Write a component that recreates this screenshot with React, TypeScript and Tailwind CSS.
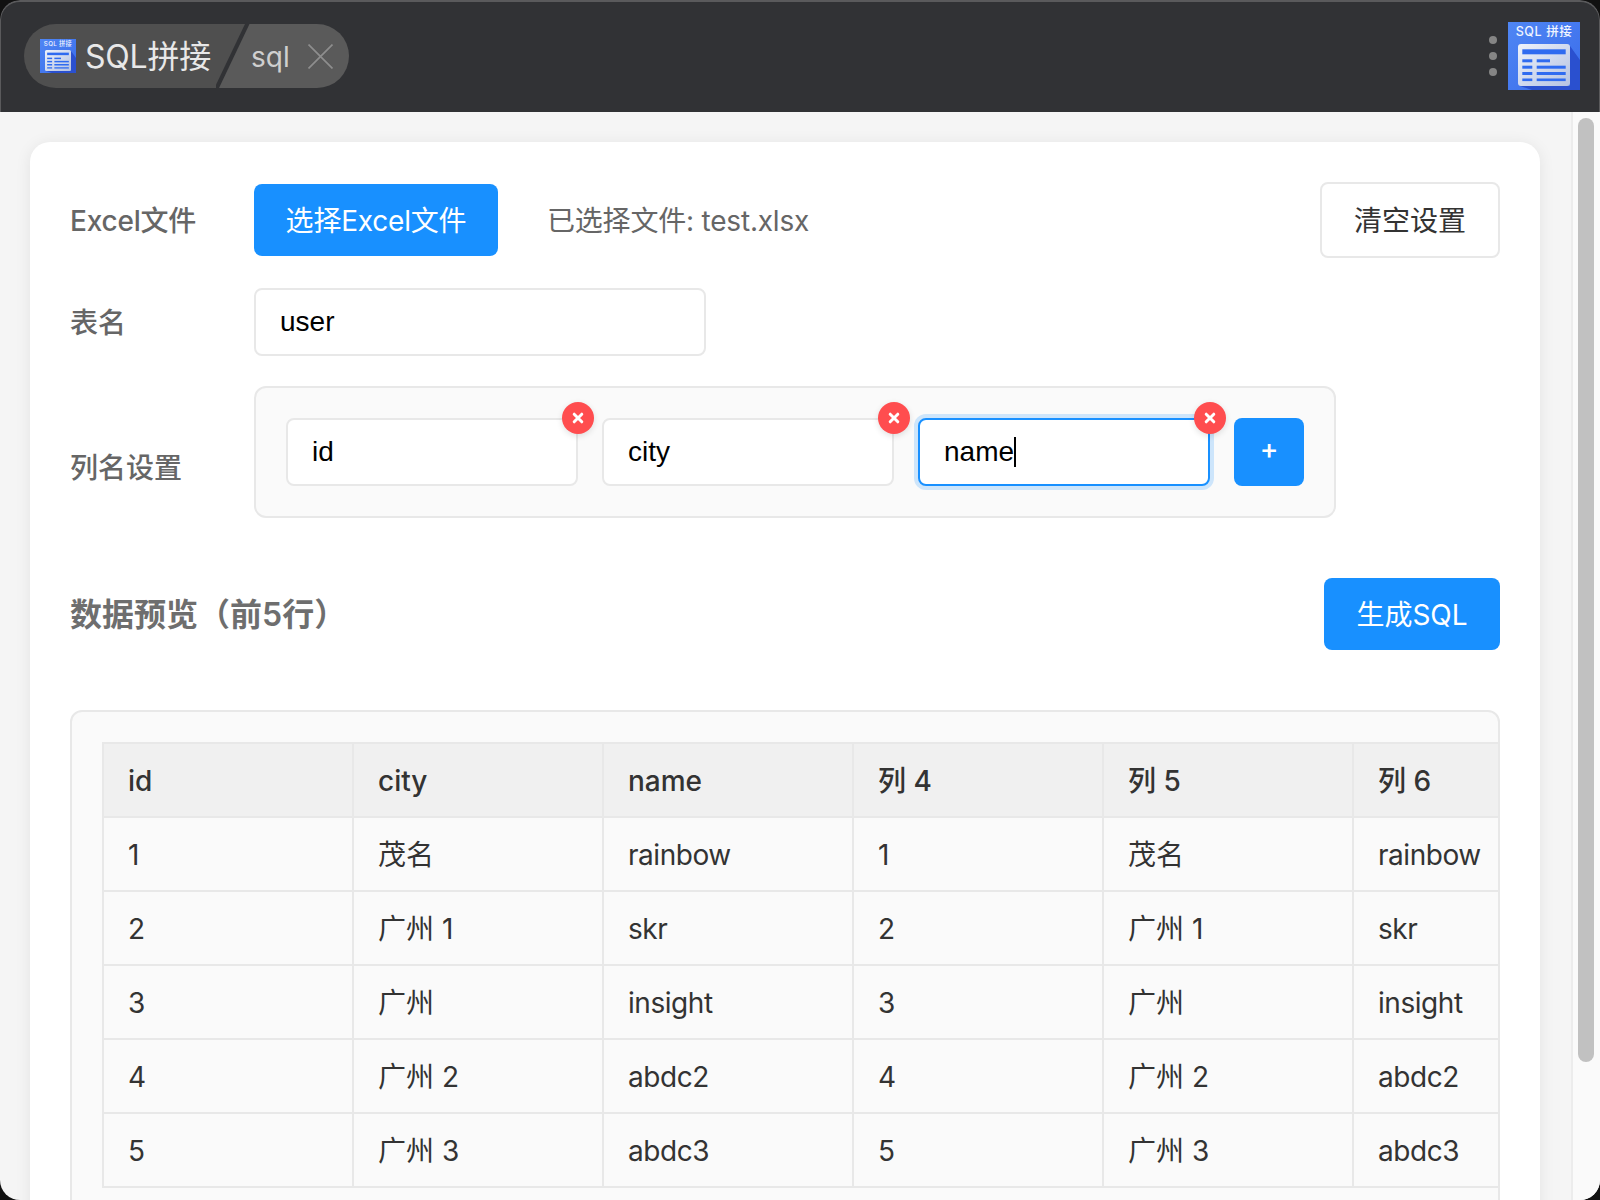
const rows = [
  ["1", "茂名", "rainbow", "1", "茂名", "rainbow"],
  ["2", "广州 1", "skr", "2", "广州 1", "skr"],
  ["3", "广州", "insight", "3", "广州", "insight"],
  ["4", "广州 2", "abdc2", "4", "广州 2", "abdc2"],
  ["5", "广州 3", "abdc3", "5", "广州 3", "abdc3"],
]
const heads = ["id", "city", "name", "列 4", "列 5", "列 6"]

const Logo = ({ className }: { className: string }) => (
  <svg viewBox="0 0 72 68" className={className}>
    <defs>
      <linearGradient id="logoBg" x1="0" y1="0" x2="1" y2="1">
        <stop offset="0" stopColor="#4f86f4" />
        <stop offset="1" stopColor="#3a6cea" />
      </linearGradient>
      <linearGradient id="logoCard" x1="0" y1="0" x2="1" y2="1">
        <stop offset="0" stopColor="#eef2fa" />
        <stop offset="1" stopColor="#b4c2e2" />
      </linearGradient>
    </defs>
    <rect width="72" height="68" fill="url(#logoBg)" />
    <polygon points="62,24 72,38 72,68 24,68 12,64 62,64" fill="#2a50cf" />
    <text x="36" y="14" textAnchor="middle" fontSize="12.5" fontWeight="500" fill="#f0f4fe" fontFamily="Inter, 'Noto Sans CJK SC', sans-serif" letterSpacing="0.6">SQL 拼接</text>
    <rect x="10" y="22" width="52" height="42" rx="3" fill="url(#logoCard)" />
    <rect x="14.3" y="27.3" width="43.4" height="5" fill="#2f6bf0" />
    <rect x="14.3" y="37.3" width="10" height="3" fill="#2f6bf0" />
    <rect x="28.7" y="37.3" width="13.3" height="3" fill="#2f6bf0" />
    <rect x="14.3" y="43.7" width="10" height="3" fill="#2f6bf0" />
    <rect x="28.7" y="43.7" width="29" height="3" fill="#2f6bf0" />
    <rect x="14.3" y="50" width="10" height="3" fill="#2f6bf0" />
    <rect x="28.7" y="50" width="29" height="3" fill="#2f6bf0" />
    <rect x="14.3" y="56.5" width="10" height="2.6" fill="#2f6bf0" />
    <rect x="28.7" y="56.5" width="29" height="2.6" fill="#2f6bf0" />
  </svg>
)

const ColInput = ({ text, focus }: { text: string; focus?: boolean }) => (
  <div className="relative">
    <div className={focus
      ? "w-[292px] h-[68px] rounded-lg border-2 border-[#1890ff] bg-white pl-[24px] flex items-center text-[28px] text-black font-['Liberation_Sans'] shadow-[0_0_0_4px_rgba(24,144,255,0.2)]"
      : "w-[292px] h-[68px] rounded-lg border-2 border-[#e8e8e8] bg-white pl-[24px] flex items-center text-[28px] text-black font-['Liberation_Sans']"}>
      {text}
      {focus && <span className="w-[2px] h-[30px] bg-black" />}
    </div>
    <div className="absolute -top-[16px] -right-[16px] w-[32px] h-[32px] rounded-full bg-[#ff4d4f] flex items-center justify-center shadow-[0_2px_6px_rgba(0,0,0,0.12)]">
      <svg viewBox="0 0 12 12" className="w-[12px] h-[12px]">
        <path d="M2.2 2.2 L9.8 9.8 M9.8 2.2 L2.2 9.8" stroke="#fff" strokeWidth="3" strokeLinecap="round" />
      </svg>
    </div>
  </div>
)

export default function App() {
  return (
    <div className="w-[1600px] h-[1200px] bg-[#111] overflow-hidden font-['Inter','Noto_Sans_CJK_SC',sans-serif]">
      <div className="w-full h-full rounded-[20px] overflow-hidden flex flex-col">
        {/* title bar */}
        <div className="h-[112px] shrink-0 bg-[#313235] border-t-2 border-x border-[#5a5a5c] rounded-t-[20px] flex items-center justify-between pl-[23px] pr-[19px]">
          <div className="flex h-[64px] rounded-full overflow-hidden -mt-[2px]">
            <div className="w-[192px] bg-[#4f4f4f] flex items-center pl-[16px]">
              <Logo className="w-[36px] h-[36px]" />
              <span className="ml-[9px] pt-[2px] text-[32px] text-[#e8e8e8] whitespace-nowrap tracking-[-0.2px]">SQL拼接</span>
            </div>
            <svg viewBox="0 0 34 64" className="w-[34px] h-[64px] block">
              <rect width="34" height="64" fill="#5a5a5a" />
              <polygon points="0,0 32,0 0,64" fill="#4f4f4f" />
              <polygon points="29,0 33.5,0 3,64 -1.5,64" fill="#313235" />
            </svg>
            <div className="w-[99px] bg-[#5a5a5a] flex items-center">
              <span className="ml-[1px] pt-[2px] text-[28px] text-[#cfcfcf]">sql</span>
              <svg viewBox="0 0 24 24" className="ml-[18px] w-[25px] h-[25px]">
                <path d="M0.5 0.5 L23.5 23.5 M23.5 0.5 L0.5 23.5" stroke="#8e8e8e" strokeWidth="1.6" />
              </svg>
            </div>
          </div>
          <div className="flex items-center gap-[11px] -mt-[2px]">
            <div className="flex flex-col gap-[8px]">
              <span className="w-[8px] h-[8px] rounded-full bg-[#858585]" />
              <span className="w-[8px] h-[8px] rounded-full bg-[#858585]" />
              <span className="w-[8px] h-[8px] rounded-full bg-[#858585]" />
            </div>
            <Logo className="w-[72px] h-[68px]" />
          </div>
        </div>

        {/* body */}
        <div className="flex-1 flex min-h-0 bg-[#f5f5f5]">
          <div className="flex-1 min-w-0 overflow-hidden pt-[30px] pl-[30px] pr-[31px]">
            <div className="bg-white rounded-t-[20px] shadow-[0_2px_16px_rgba(0,0,0,0.08)] px-[40px] pt-[40px] pb-[40px] h-[1100px]">
              <div className="flex items-center h-[76px]">
                <div className="w-[184px] pt-[2px] text-[28px] font-medium text-[#666] tracking-[-0.2px]">Excel文件</div>
                <button className="h-[72px] w-[244px] pt-[2px] rounded-lg bg-[#1890ff] text-white text-[28px] tracking-[-0.2px]">选择Excel文件</button>
                <div className="ml-[49px] pt-[2px] text-[28px] text-[#666] tracking-[-0.2px]">已选择文件: test.xlsx</div>
                <button className="ml-auto h-[76px] w-[180px] pt-[2px] rounded-lg bg-white border-2 border-[#e8e8e8] text-[28px] text-[#333]">清空设置</button>
              </div>

              <div className="flex items-center mt-[30px]">
                <div className="w-[184px] pt-[2px] text-[28px] font-medium text-[#666]">表名</div>
                <div className="w-[452px] h-[68px] rounded-lg border-2 border-[#e8e8e8] pl-[24px] flex items-center text-[28px] text-black font-['Liberation_Sans']">user</div>
              </div>

              <div className="flex items-center mt-[30px]">
                <div className="w-[184px] mt-[32px] text-[28px] font-medium text-[#666]">列名设置</div>
                <div className="w-[1082px] h-[132px] rounded-xl border-2 border-[#e8e8e8] bg-[#fafafa] pl-[30px] flex items-center gap-[24px]">
                  <ColInput text="id" />
                  <ColInput text="city" />
                  <ColInput text="name" focus />
                  <button className="w-[70px] h-[68px] pb-[6px] rounded-lg bg-[#1890ff] text-white text-[28px] font-medium">+</button>
                </div>
              </div>

              <div className="flex items-center justify-between mt-[60px]">
                <div className="pt-[2px] text-[32px] font-semibold text-[#6e6e6e]">数据预览（前5行）</div>
                <button className="w-[176px] h-[72px] pt-[2px] rounded-lg bg-[#1890ff] text-white text-[28px]">生成SQL</button>
              </div>

              <div className="mt-[60px] rounded-xl border-2 border-[#e8e8e8] bg-[#fafafa] pl-[30px] pt-[30px] pb-[30px] overflow-hidden">
                <table className="table-fixed w-[1500px] border-collapse text-[28px] text-[#333]">
                  <thead>
                    <tr className="h-[74px] bg-[#f0f0f0]">
                      {heads.map(h => (
                        <th key={h} className="w-[250px] border-2 border-[#e8e8e8] pl-[24px] pt-[2px] text-left font-medium">{h}</th>
                      ))}
                    </tr>
                  </thead>
                  <tbody>
                    {rows.map(r => (
                      <tr key={r[0]} className="h-[74px]">
                        {r.map((c, i) => (
                          <td key={i} className={i % 3 === 2
                            ? "border-2 border-[#e8e8e8] pl-[24px] pt-[2px] tracking-[-0.45px]"
                            : "border-2 border-[#e8e8e8] pl-[24px] pt-[2px]"}>{c}</td>
                        ))}
                      </tr>
                    ))}
                  </tbody>
                </table>
              </div>
            </div>
          </div>

          {/* scrollbar */}
          <div className="w-[29px] shrink-0 bg-[#fafafa] border-l-2 border-[#ececec] pl-[5px] pt-[6px]">
            <div className="w-[16px] h-[944px] rounded-full bg-[#c1c1c1]" />
          </div>
        </div>
      </div>
    </div>
  )
}
